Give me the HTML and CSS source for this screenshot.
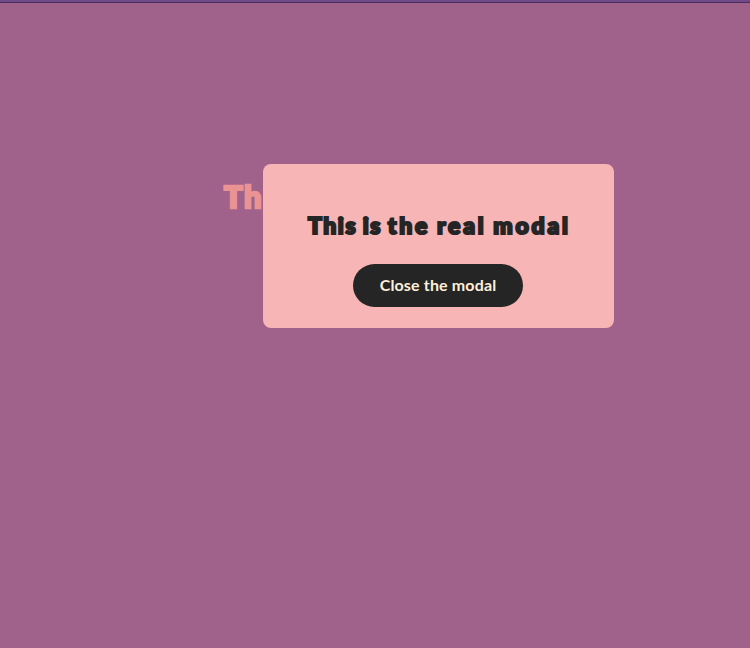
FILE: index.html
```html
<!DOCTYPE html>
<html lang="en">
<head>
<meta charset="utf-8">
<title>Modal</title>
<link rel="stylesheet" href="styles.css">
</head>
<body>
<div class="top-bar"></div>
<main class="page">
  <h1 class="page-title">Th</h1>
</main>
<div class="overlay">
  <section class="modal" role="dialog" aria-modal="true" aria-labelledby="modal-title">
    <h2 class="modal-title" id="modal-title"><span class="tight">This is </span>the real modal</h2>
    <button class="modal-close" type="button">Close the modal</button>
  </section>
</div>
</body>
</html>
```
FILE: styles.css
```css
* { box-sizing: border-box; }
body {
  margin: 0;
  height: 648px;
  overflow: hidden;
  background: #a0618b;
  font-family: Lato, sans-serif;
}
.top-bar {
  height: 3px;
  background: #6f4a87;
  border-bottom: 1px solid #4b2d66;
}
.page { padding: 173px 0 0 224px; }
.page-title {
  margin: 0;
  color: #eb9293;
  font: 900 31px/40px Lato, sans-serif;
  letter-spacing: 1.5px;
  -webkit-text-stroke: 2.4px #eb9293;
}
.overlay {
  position: absolute;
  inset: 164px 136px auto 263px;
}
.modal {
  display: flex;
  flex-direction: column;
  align-items: center;
  height: 164px;
  padding-top: 45px;
  border-radius: 8px;
  background: #f8b5b6;
}
.modal-title {
  margin: 0 0 23px;
  color: #252525;
  font: 900 23px/32px Lato, sans-serif;
  letter-spacing: 2.8px;
  word-spacing: -1.5px;
  text-indent: 1.6px;
  -webkit-text-stroke: 2.2px #252525;
  white-space: nowrap;
}
.tight { letter-spacing: 1.6px; }
.modal-close {
  width: 170px;
  height: 43px;
  margin-right: 1px;
  padding: 0 0 2px;
  border: 0;
  border-radius: 22px;
  background: #252525;
  color: #fdf0d9;
  font: 700 16px/41px Lato, sans-serif;
  letter-spacing: 0.15px;
  white-space: nowrap;
}
```
